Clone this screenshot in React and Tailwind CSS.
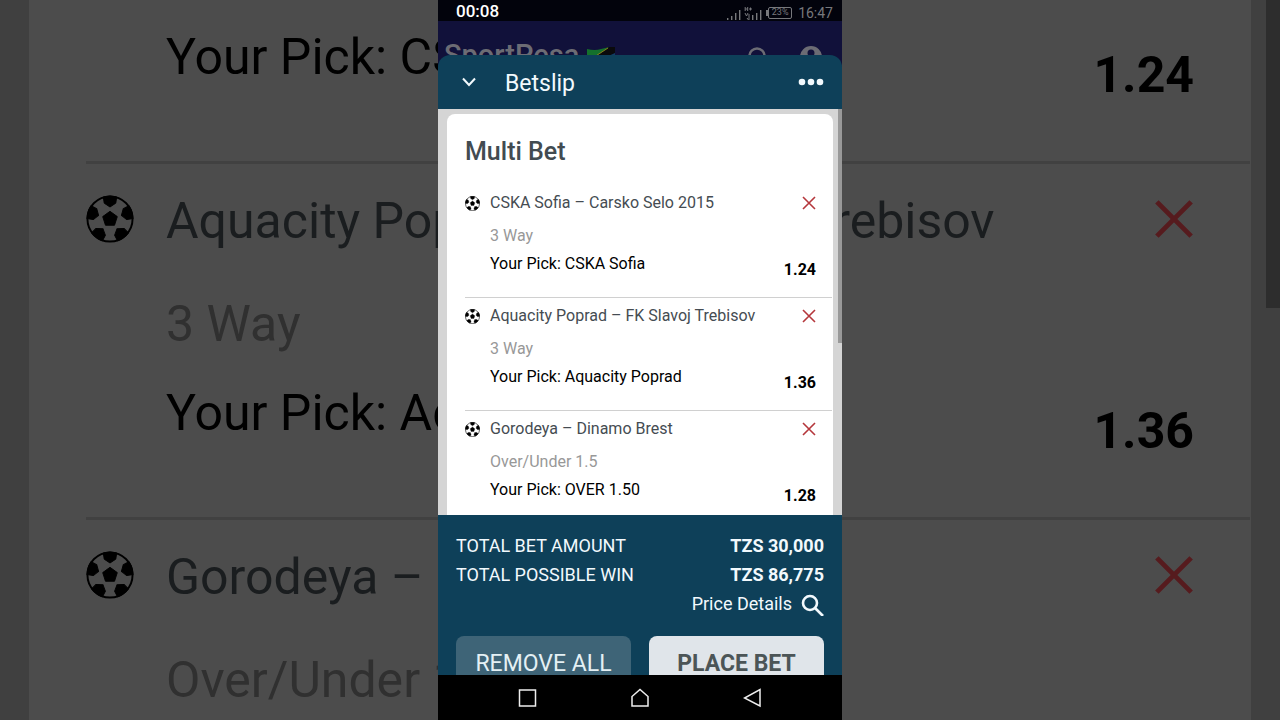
const bets = [
    { id: 1, match: 'CSKA Sofia – Carsko Selo 2015', market: '3 Way', pick: 'CSKA Sofia', odds: '1.24' },
    { id: 2, match: 'Aquacity Poprad – FK Slavoj Trebisov', market: '3 Way', pick: 'Aquacity Poprad', odds: '1.36' },
    { id: 3, match: 'Gorodeya – Dinamo Brest', market: 'Over/Under 1.5', pick: 'OVER 1.50', odds: '1.28' },
]

const totals = [
    { label: 'TOTAL BET AMOUNT', value: 'TZS 30,000' },
    { label: 'TOTAL POSSIBLE WIN', value: 'TZS 86,775' },
]

function Football({ className }) {
    return (
        <svg viewBox="-25 -25 50 50" className={className} aria-hidden="true">
            <circle r="23.5" fill="none" stroke="currentColor" strokeWidth="2" />
            <path d="M0-8 7.6-2.5 4.7 6.5H-4.7L-7.6-2.5Z" fill="currentColor" stroke="currentColor" strokeLinejoin="round" />
            {[0, 72, 144, 216, 288].map(angle => (
                <path
                    key={angle}
                    d="M-7-23Q0-25 7-23L6-16.5 0-12.5-6-16.5Z"
                    fill="currentColor"
                    stroke="currentColor"
                    strokeLinejoin="round"
                    transform={`rotate(${angle})`}
                />
            ))}
        </svg>
    )
}

function Cross({ className, strokeWidth }) {
    return (
        <svg viewBox="0 0 14 14" className={className} fill="none" stroke="currentColor" strokeWidth={strokeWidth} aria-hidden="true">
            <path d="M1 1 13 13M13 1 1 13" />
        </svg>
    )
}

// Dimmed, enlarged copy of the slip that fills the space around the phone
function Backdrop() {
    return (
        <div className="absolute inset-0 flex overflow-hidden bg-[#404040] pl-[29px]" aria-hidden="true">
            <div className="min-w-0 flex-1 bg-[#4c4c4c] pl-[57px]">
                <div className="-mt-48">
                    {bets.map(b => (
                        <div key={b.id} className="mr-px border-b-[3px] border-[#414141] pt-[27px] pr-14 pb-14 text-[50px] leading-[60px] whitespace-nowrap">
                            <div className="flex items-start gap-8">
                                <Football className="mt-1 size-12 shrink-0 text-black" />
                                <div className="flex-1 text-[#1a1d1f]">{b.match}</div>
                                <Cross className="mt-2 size-10 shrink-0 text-[#561b1e]" strokeWidth="1.7" />
                            </div>
                            <div className="mt-[43px] pl-20 text-[#303030]">{b.market}</div>
                            <div className="mt-[29px] flex h-[78px] justify-between pl-20 text-black">
                                <div>Your Pick: {b.pick}</div>
                                <div className="self-end font-bold">{b.odds}</div>
                            </div>
                        </div>
                    ))}
                </div>
            </div>
            <div className="w-[15px]" />
            <div className="h-[308px] w-[14px] bg-[#2d2d2d]" />
        </div>
    )
}

function StatusBar() {
    return (
        <div className="flex h-[21px] shrink-0 items-center bg-[#02030c] pr-[9px] pl-[18px] text-[#77787c]">
            <div className="flex-1 text-[17px] leading-5 font-medium text-white">00:08</div>
            <div className="flex items-center pt-1">
                <svg viewBox="0 0 36 16" className="mr-1 h-4 w-9" fill="none" stroke="currentColor" strokeWidth="1.4" aria-hidden="true">
                    <path d="M1.7 15v-2M5.7 15v-4M9.7 15V8M13.7 15V5" />
                    <path d="M26.7 15v-5M30.7 15V8M34.7 15V5" />
                    <path d="M19.2 2v4M21.7 2v4M19.2 4h2.500M23 4h3M24.500 2.500v3" strokeWidth="1" />
                    <path d="M19 8l1.500 3 1.500-3M23 15V9M21 13l1.500 2" strokeWidth="1" />
                </svg>
                <div className="h-[6px] w-[2px] bg-[#77787c]" />
                <div className="mr-[6px] flex h-3 w-6 items-center justify-center rounded-xs border border-[#77787c] text-[9px] leading-none">23%</div>
                <div className="text-sm leading-5">16:47</div>
            </div>
        </div>
    )
}

function SiteHeader() {
    return (
        <div className="h-[34px] shrink-0 overflow-hidden">
            <div className="flex h-[68px] items-center pr-5 pl-[6px] text-[#6c6c74]">
                <div className="text-[29px] leading-8 font-medium">SportPesa</div>
                <svg viewBox="0 0 28 16" className="ml-2 h-4 w-7" aria-hidden="true">
                    <path d="M0 2Q8 4 14 2T28 0V14Q20 12 14 14T0 16Z" fill="#14702c" />
                    <path d="M28 0V14Q20 12 14 14Z" fill="#123b66" />
                    <path d="M22 0H28V6L6 16H0Z" fill="#0a0a0c" />
                    <path d="M21 1 1 14" stroke="#8a7f1c" strokeWidth="1" />
                </svg>
                <div className="flex-1" />
                <button type="button" aria-label="Search" className="mr-7">
                    <svg viewBox="0 0 24 24" className="size-6" fill="none" stroke="currentColor" strokeWidth="2.500">
                        <circle cx="9" cy="13" r="7.500" />
                        <path d="m14 18 7 6" />
                    </svg>
                </button>
                <button type="button" aria-label="Account" className="pt-1">
                    <svg viewBox="0 0 22 22" className="size-[22px]">
                        <path
                            fillRule="evenodd"
                            fill="currentColor"
                            d="M11 0a11 11 0 1 0 0 22 11 11 0 0 0 0-22Zm0 3.500a3.500 3.500 0 1 1 0 7 3.500 3.500 0 0 1 0-7Zm0 15.500a8 8 0 0 1-6.500-3.500c0-2 4.300-3 6.500-3s6.500 1 6.500 3A8 8 0 0 1 11 19Z"
                        />
                    </svg>
                </button>
            </div>
        </div>
    )
}

function BetRow({ bet, last }) {
    return (
        <li className={`mr-px pt-2 pr-4 pb-[17px] text-base leading-5 ${last ? '' : 'border-b border-[#d0d0d0]'}`}>
            <div className="flex items-center gap-[10px]">
                <Football className="size-[15px] shrink-0 text-black" />
                <div className="flex-1 text-[#454c52]">{bet.match}</div>
                <button type="button" aria-label={`Remove ${bet.match}`} className="text-[#b5373c]">
                    <Cross className="size-[14px]" strokeWidth="1.6" />
                </button>
            </div>
            <div className="mt-[13px] pl-[25px] text-[#989898]">{bet.market}</div>
            <div className="mt-2 flex h-[26px] justify-between pl-[25px] text-black">
                <div>Your Pick: {bet.pick}</div>
                <div className="self-end font-bold">{bet.odds}</div>
            </div>
        </li>
    )
}

function SystemNav() {
    return (
        <nav className="grid h-[45px] shrink-0 grid-cols-3 items-center justify-items-center bg-black px-[33px] text-[#eeeeee]">
            <button type="button" aria-label="Recent apps">
                <svg viewBox="0 0 20 20" className="size-5" fill="none" stroke="currentColor" strokeWidth="1.5">
                    <path d="M2.500 2H18.500V18H2.500Z" />
                </svg>
            </button>
            <button type="button" aria-label="Home">
                <svg viewBox="0 0 20 20" className="size-5" fill="none" stroke="currentColor" strokeWidth="1.5">
                    <path d="M2 18V8.500L10 1.500 18 8.500V18Z" />
                </svg>
            </button>
            <button type="button" aria-label="Back">
                <svg viewBox="0 0 20 20" className="size-5" fill="none" stroke="currentColor" strokeWidth="1.5">
                    <path d="M17 1.500V18L1.500 10Z" />
                </svg>
            </button>
        </nav>
    )
}

export default function App() {
    return (
        <div className="relative flex h-screen justify-center overflow-hidden font-[Roboto,sans-serif]">
            <Backdrop />

            <main className="relative flex aspect-[101/180] h-full flex-col overflow-hidden bg-[#11113a]">
                <StatusBar />
                <SiteHeader />

                {/* Sheet header */}
                <header className="flex h-[54px] shrink-0 items-center rounded-t-xl bg-[#0e4059] pr-[18px] pl-6 text-[#f2f9fd]">
                    <button type="button" aria-label="Close betslip">
                        <svg viewBox="0 0 14 14" className="size-[14px]" fill="none" stroke="currentColor" strokeWidth="2">
                            <path d="M1 3.500 7 10 13 3.500" />
                        </svg>
                    </button>
                    <h1 className="ml-[29px] flex-1 pt-1 text-[23px] leading-7">Betslip</h1>
                    <button type="button" aria-label="More options">
                        <svg viewBox="0 0 26 8" className="h-2 w-[26px]" fill="currentColor">
                            <circle cx="4" cy="4" r="3.300" />
                            <circle cx="13" cy="4" r="3.300" />
                            <circle cx="22" cy="4" r="3.300" />
                        </svg>
                    </button>
                </header>

                {/* Bet list */}
                <div className="flex min-h-0 flex-1 overflow-hidden bg-[#d5d5d5] pl-[9px]">
                    <section className="mt-[5px] min-w-0 flex-1 rounded-t-lg bg-white pl-[18px]">
                        <h2 className="pt-6 pb-[19px] text-[25px] leading-7 font-medium text-[#424b51]">Multi Bet</h2>
                        <ul>
                            {bets.map((b, i) => (
                                <BetRow key={b.id} bet={b} last={i === bets.length - 1} />
                            ))}
                        </ul>
                    </section>
                    <div className="ml-[5px] h-[234px] w-1 bg-[#999999]" />
                </div>

                {/* Totals and actions */}
                <footer className="h-40 shrink-0 overflow-hidden bg-[#0e4059] px-[18px] pt-4 text-[#f2f9fd]">
                    <dl className="text-lg leading-[29px]">
                        {totals.map(t => (
                            <div key={t.label} className="flex justify-between">
                                <dt>{t.label}</dt>
                                <dd className="font-bold">{t.value}</dd>
                            </div>
                        ))}
                    </dl>
                    <div className="flex justify-end">
                        <button type="button" className="flex items-center gap-2 text-lg leading-[29px]">
                            Price Details
                            <svg viewBox="0 0 24 24" className="size-6" fill="none" stroke="currentColor" strokeWidth="2.600" aria-hidden="true">
                                <circle cx="10" cy="11" r="7" />
                                <path d="m15 16 8 8" />
                            </svg>
                        </button>
                    </div>
                    <div className="mt-[18px] grid grid-cols-2 gap-[18px] text-[23px] leading-7">
                        <button type="button" className="h-14 rounded-lg bg-[#3e6477] text-[#e4f0f4]">REMOVE ALL</button>
                        <button type="button" className="h-14 rounded-lg bg-[#e0e5ea] font-bold text-[#4c5557]">PLACE BET</button>
                    </div>
                </footer>

                <SystemNav />
            </main>
        </div>
    )
}
